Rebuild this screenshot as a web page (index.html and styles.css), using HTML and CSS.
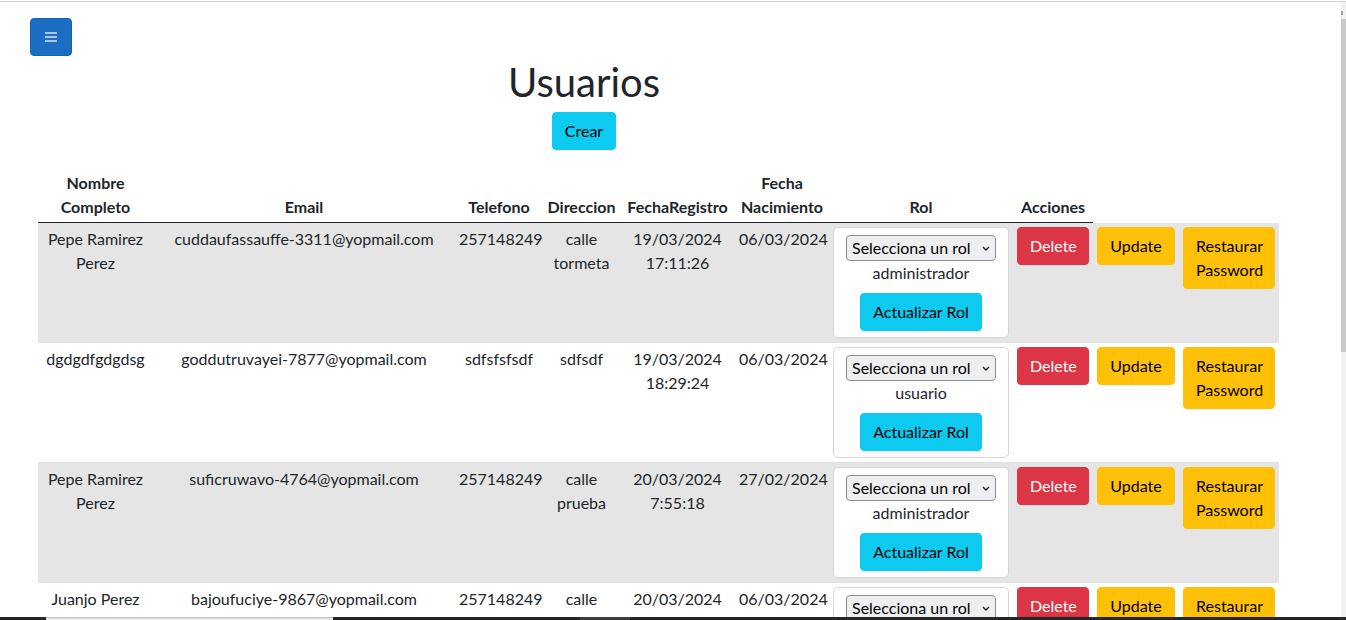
FILE: index.html
```html
<!DOCTYPE html>
<html lang="es">
<head>
<meta charset="utf-8">
<title>Usuarios</title>
<link rel="stylesheet" href="styles.css">
</head>
<body>
<div class="frame-top"></div>
<header class="topbar">
  <button class="menu-btn" aria-label="Menu">
    <svg width="12" height="10" viewBox="0 0 12 10"><rect x="0" y="0" width="12" height="2" fill="currentColor"/><rect x="0" y="4" width="12" height="2" fill="currentColor"/><rect x="0" y="8" width="12" height="2" fill="currentColor"/></svg>
  </button>
</header>
<main class="content">
  <h1 class="title">Usuarios</h1>
  <div class="create-row"><button class="btn btn-info">Crear</button></div>
  <table class="users">
    <colgroup>
      <col class="w-nombre"><col class="w-email"><col class="w-tel"><col class="w-dir"><col class="w-reg"><col class="w-nac"><col class="w-rol"><col class="w-acc"><col class="w-upd"><col class="w-res">
    </colgroup>
    <thead>
      <tr>
        <th>Nombre Completo</th>
        <th>Email</th>
        <th>Telefono</th>
        <th>Direccion</th>
        <th>FechaRegistro</th>
        <th>Fecha Nacimiento</th>
        <th>Rol</th>
        <th>Acciones</th>
      </tr>
    </thead>
    <tbody>
      <tr>
        <td>Pepe Ramirez Perez</td>
        <td>cuddaufassauffe-3311@yopmail.com</td>
        <td>257148249</td>
        <td>calle tormeta</td>
        <td>19/03/2024 17:11:26</td>
        <td>06/03/2024</td>
        <td>
          <div class="role-card">
            <div class="select-wrap">
              <select class="role-select"><option>Selecciona un rol</option><option>administrador</option><option>usuario</option></select>
              <svg class="chev" width="8" height="5" viewBox="0 0 8 5"><path d="M1 1 L4 4 L7 1" fill="none" stroke="#222" stroke-width="1.4"/></svg>
            </div>
            <span class="role-name">administrador</span>
            <button class="btn btn-info role-btn">Actualizar Rol</button>
          </div>
        </td>
        <td><button class="btn btn-danger btn-fill">Delete</button></td>
        <td><button class="btn btn-warning btn-fill">Update</button></td>
        <td><button class="btn btn-warning btn-fill">Restaurar Password</button></td>
      </tr>
      <tr>
        <td>dgdgdfgdgdsg</td>
        <td>goddutruvayei-7877@yopmail.com</td>
        <td>sdfsfsfsdf</td>
        <td>sdfsdf</td>
        <td>19/03/2024 18:29:24</td>
        <td>06/03/2024</td>
        <td>
          <div class="role-card">
            <div class="select-wrap">
              <select class="role-select"><option>Selecciona un rol</option><option>administrador</option><option>usuario</option></select>
              <svg class="chev" width="8" height="5" viewBox="0 0 8 5"><path d="M1 1 L4 4 L7 1" fill="none" stroke="#222" stroke-width="1.4"/></svg>
            </div>
            <span class="role-name">usuario</span>
            <button class="btn btn-info role-btn">Actualizar Rol</button>
          </div>
        </td>
        <td><button class="btn btn-danger btn-fill">Delete</button></td>
        <td><button class="btn btn-warning btn-fill">Update</button></td>
        <td><button class="btn btn-warning btn-fill">Restaurar Password</button></td>
      </tr>
      <tr>
        <td>Pepe Ramirez Perez</td>
        <td>suficruwavo-4764@yopmail.com</td>
        <td>257148249</td>
        <td>calle prueba</td>
        <td>20/03/2024 7:55:18</td>
        <td>27/02/2024</td>
        <td>
          <div class="role-card">
            <div class="select-wrap">
              <select class="role-select"><option>Selecciona un rol</option><option>administrador</option><option>usuario</option></select>
              <svg class="chev" width="8" height="5" viewBox="0 0 8 5"><path d="M1 1 L4 4 L7 1" fill="none" stroke="#222" stroke-width="1.4"/></svg>
            </div>
            <span class="role-name">administrador</span>
            <button class="btn btn-info role-btn">Actualizar Rol</button>
          </div>
        </td>
        <td><button class="btn btn-danger btn-fill">Delete</button></td>
        <td><button class="btn btn-warning btn-fill">Update</button></td>
        <td><button class="btn btn-warning btn-fill">Restaurar Password</button></td>
      </tr>
      <tr>
        <td>Juanjo Perez</td>
        <td>bajoufuciye-9867@yopmail.com</td>
        <td>257148249</td>
        <td>calle prueba</td>
        <td>20/03/2024 8:02:41</td>
        <td>06/03/2024</td>
        <td>
          <div class="role-card">
            <div class="select-wrap">
              <select class="role-select"><option>Selecciona un rol</option><option>administrador</option><option>usuario</option></select>
              <svg class="chev" width="8" height="5" viewBox="0 0 8 5"><path d="M1 1 L4 4 L7 1" fill="none" stroke="#222" stroke-width="1.4"/></svg>
            </div>
            <span class="role-name">usuario</span>
            <button class="btn btn-info role-btn">Actualizar Rol</button>
          </div>
        </td>
        <td><button class="btn btn-danger btn-fill">Delete</button></td>
        <td><button class="btn btn-warning btn-fill">Update</button></td>
        <td><button class="btn btn-warning btn-fill">Restaurar Password</button></td>
      </tr>
    </tbody>
  </table>
</main>
<div class="scrollbar"><div class="scroll-arrow"></div><div class="scroll-thumb"></div></div>
<div class="taskbar"><div class="task-light"></div><div class="task-mid"></div></div>
</body>
</html>
```
FILE: styles.css
```css
html {
  overflow: hidden;
}
* {
  box-sizing: border-box;
}
body {
  margin: 0;
  font-family: "Segoe UI", Lato, "Noto Sans", sans-serif;
  font-size: 16px;
  line-height: 1.5;
  color: #212529;
  background: #fff;
}
.frame-top {
  position: fixed;
  top: 1px;
  left: 0;
  right: 0;
  height: 1px;
  background: #d3d3d3;
}
.topbar {
  padding: 18px 0 0 30px;
}
.menu-btn {
  width: 42px;
  height: 38px;
  display: flex;
  align-items: center;
  justify-content: center;
  padding: 0;
  border: 1px solid #1861ac;
  border-radius: 4px;
  background: #1b6ec2;
  color: rgba(255, 255, 255, 0.62);
}
.menu-btn svg {
  display: block;
}
.content {
  margin-left: 38px;
  width: 1092px;
}
.title {
  margin: 2px 0 6px;
  font-size: 40px;
  font-weight: 400;
  line-height: 1.2;
  text-align: center;
  color: #212529;
}
.create-row {
  text-align: center;
}
.btn {
  display: inline-block;
  font-family: inherit;
  font-size: 16px;
  line-height: 1.5;
  padding: 6px 12px;
  border: 1px solid transparent;
  border-radius: 4px;
  cursor: pointer;
  text-align: center;
}
.btn-info {
  background: #0dcaf0;
  border-color: #0dcaf0;
  color: #000;
}
.btn-danger {
  background: #dc3545;
  border-color: #dc3545;
  color: #fff;
}
.btn-warning {
  background: #ffc107;
  border-color: #ffc107;
  color: #000;
}
.btn-fill {
  display: block;
  width: 100%;
}
.users {
  margin-top: 17px;
  width: 1241px;
  table-layout: fixed;
  border-collapse: collapse;
}
.w-nombre { width: 115px; }
.w-email { width: 302px; }
.w-tel { width: 88px; }
.w-dir { width: 77px; }
.w-reg { width: 115px; }
.w-nac { width: 94px; }
.w-rol { width: 184px; }
.w-acc { width: 80px; }
.w-upd { width: 86px; }
.w-res { width: 100px; }
.users th {
  padding: 4px 4px 3px;
  font-weight: 700;
  text-align: center;
  vertical-align: bottom;
  border-bottom: 1px solid #212529;
}
.users td {
  padding: 4px;
  text-align: center;
  vertical-align: top;
  border-bottom: 1px solid #dee2e6;
}
.users tbody tr:nth-child(odd) td {
  background: #e5e5e5;
}
.role-card {
  display: flex;
  flex-direction: column;
  align-items: center;
  padding: 7px 7px 6px;
  border: 1px solid #d6d6d6;
  border-radius: 5px;
  background: #fff;
}
.select-wrap {
  position: relative;
  width: 150px;
  height: 26px;
}
.role-select {
  appearance: none;
  -webkit-appearance: none;
  width: 150px;
  height: 26px;
  margin: 0;
  padding: 0 18px 0 5px;
  font-family: inherit;
  font-size: 16px;
  line-height: 24px;
  color: #000;
  background: #efeff1;
  border: 1px solid #8e8e97;
  border-radius: 4px;
}
.chev {
  position: absolute;
  right: 6px;
  top: 11px;
  pointer-events: none;
}
.role-name {
  display: block;
  line-height: 24px;
}
.role-btn {
  margin-top: 8px;
}
.scrollbar {
  position: fixed;
  top: 2px;
  right: 0;
  bottom: 3px;
  width: 5px;
  background: #f0f0f0;
}
.scroll-arrow {
  position: absolute;
  top: 9px;
  left: 0;
  width: 2px;
  height: 4px;
  background: #a0a0a0;
}
.scroll-thumb {
  position: absolute;
  top: 17px;
  left: 0;
  right: 0;
  height: 333px;
  background: #c9c9c9;
}
.taskbar {
  position: fixed;
  left: 0;
  right: 0;
  bottom: 0;
  height: 3px;
  background: #262626;
}
.task-light {
  position: absolute;
  left: 46px;
  width: 287px;
  top: 0;
  bottom: 0;
  background: #e6e6e6;
  border-top: 1px solid #bdbdbd;
}
.task-mid {
  position: absolute;
  left: 580px;
  width: 50px;
  top: 0;
  bottom: 0;
  background: #3c3c3c;
}
```
